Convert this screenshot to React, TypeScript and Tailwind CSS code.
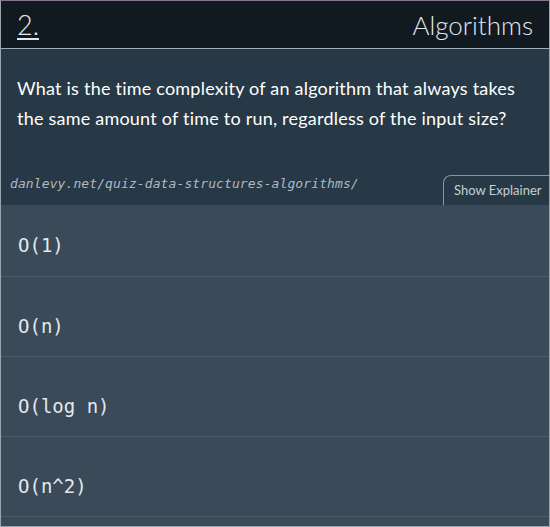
export default function App() {
  const answers = ["O(1)", "O(n)", "O(log n)", "O(n^2)"];
  return (
    <div className="w-[550px] h-[527px] overflow-hidden flex flex-col border-x border-b border-[#9aa4ab] border-t border-t-[#8a7190] bg-[#3a4a58]" style={{ fontFamily: "Lato, 'Open Sans', sans-serif" }}>
      <div className="h-[48px] shrink-0 bg-[#121a21] border-b border-[#a3adb4] flex items-center justify-between pl-4 pr-4">
        <span className="text-[27px] font-light text-[#e4e7ea] underline underline-offset-[3px] decoration-[2px] pt-[2px]">2.</span>
        <span className="text-[26px] font-light text-[#e4e7ea] pt-[2px]">Algorithms</span>
      </div>
      <div className="h-[156px] shrink-0 bg-[#273846] flex flex-col">
        <p className="px-4 pt-[24px] text-[18px] leading-[30px] text-white tracking-[0.22px]">
          What is the time complexity of an algorithm that always takes the same amount of time to run, regardless of the input size?
        </p>
        <div className="mt-auto flex items-end justify-between">
          <span className="pl-[9px] pb-[12px] text-[13px] italic text-[#aebac3] tracking-[0.1px]" style={{ fontFamily: "'DejaVu Sans Mono', monospace" }}>
            danlevy.net/quiz-data-structures-algorithms/
          </span>
          <div className="w-[106px] h-[30px] border-t border-l border-[#8796a1] rounded-tl-[8px] flex items-center pl-[10px] text-[13px] text-[#c6cfd6]">
            Show Explainer
          </div>
        </div>
      </div>
      <div className="flex flex-col">
        {answers.map((a, i) => (
          <div
            key={a}
            className={`${i === 0 ? "h-[72px] pt-[26px]" : "h-[80px] pt-[35px]"} border-b border-[#4b5c6a] pl-[17px] text-[19px] text-[#e2e8ec]`}
            style={{ fontFamily: "'DejaVu Sans Mono', monospace" }}
          >
            {a}
          </div>
        ))}
      </div>
    </div>
  );
}
